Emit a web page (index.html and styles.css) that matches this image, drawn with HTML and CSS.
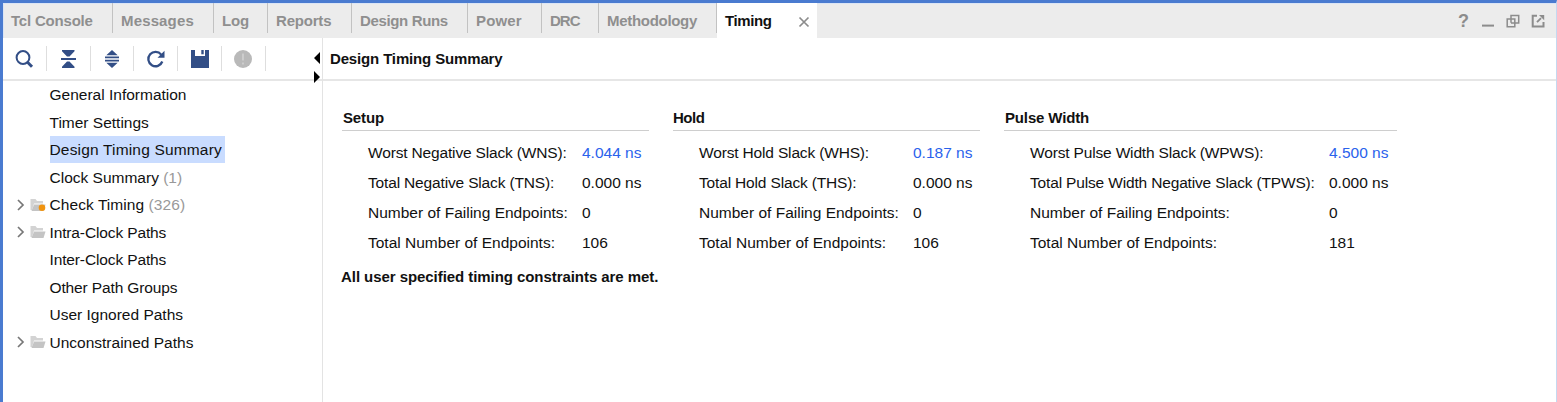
FILE: index.html
```html
<!DOCTYPE html>
<html lang="en">
<head>
<meta charset="utf-8">
<title>Timing</title>
<link rel="stylesheet" href="styles.css">
</head>
<body>
<div class="window">
  <header class="tabbar">
    <nav class="tabs">
      <div class="tab tab-console">Tcl Console</div>
      <div class="tab tab-messages">Messages</div>
      <div class="tab tab-log">Log</div>
      <div class="tab tab-reports">Reports</div>
      <div class="tab tab-runs">Design Runs</div>
      <div class="tab tab-power">Power</div>
      <div class="tab tab-drc">DRC</div>
      <div class="tab tab-method">Methodology</div>
      <div class="tab tab-active"><span>Timing</span>
        <svg class="close" width="12" height="12" viewBox="0 0 12 12"><path d="M1.5 1.5l9 9M10.5 1.5l-9 9" stroke="#8c8c8c" stroke-width="1.7"/></svg>
      </div>
    </nav>
    <div class="window-actions">
      <span class="help">?</span>
      <svg width="14" height="14" viewBox="0 0 14 14"><path d="M1 11.6h12" stroke="#8c8c8c" stroke-width="2"/></svg>
      <svg width="14" height="14" viewBox="0 0 14 14" fill="none" stroke="#8c8c8c" stroke-width="1.5"><path d="M1.2 5h7.6v7.7H1.2z"/><path d="M5 8.800V1.400h7.700V9H5"/></svg>
      <svg width="14" height="14" viewBox="0 0 14 14" fill="none" stroke="#8c8c8c"><path d="M6 1.7H1.7v10.8h10.8V8" stroke-width="2"/><path d="M6 8.200l4-4" stroke-width="1.900"/><path d="M8 1h5.200v5.200z" fill="#8c8c8c" stroke="none"/></svg>
    </div>
  </header>
  <div class="content">
    <aside class="sidebar">
      <div class="toolbar">
        <div class="tool"><svg width="20" height="20" viewBox="0 0 20 20" fill="none" stroke="#324e86"><circle cx="9" cy="8.5" r="6.4" stroke-width="2"/><path d="M13.3 13l4.7 4.7" stroke-width="3"/></svg></div>
        <div class="tool"><svg width="20" height="20" viewBox="0 0 20 20" fill="#324e86"><path d="M4 1h12.500v1.300L11.500 7.500H9L4 2.300zM3 9h15v2H3zM9 12.500h2.500l5 5.200V19H4v-1.300z"/></svg></div>
        <div class="tool"><svg width="20" height="20" viewBox="0 0 20 20" fill="#324e86"><path d="M10 1l5.700 5.300H4.300zM3 7.500h14v1.700H3zM3 10.700h14v1.700H3zM4.300 13.700h11.400L10 19z"/></svg></div>
        <div class="tool"><svg width="20" height="20" viewBox="0 0 20 20"><path d="M16.300 12.500A7.200 7.200 0 1 1 15.200 5.600" fill="none" stroke="#324e86" stroke-width="2.300"/><path d="M18.500 1.800v7h-7z" fill="#324e86"/></svg></div>
        <div class="tool"><svg width="20" height="20" viewBox="0 0 20 20"><path d="M1 1h4v6h10V1h4v18H1z" fill="#324e86"/><path d="M11.300 1h2.400v4.300h-2.400z" fill="#324e86"/></svg></div>
        <div class="tool"><svg width="20" height="20" viewBox="0 0 20 20"><circle cx="10" cy="10" r="9" fill="#b9b9b9"/><path d="M10 4.500v7M10 13.500v2" stroke="#cfcfcf" stroke-width="1.800"/></svg></div>
        <svg class="splitter" width="8" height="32" viewBox="0 0 8 32"><path d="M7 0v12L1 6zM1 19v12l6-6z"/></svg>
      </div>
      <ul class="tree">
        <li><span class="label">General Information</span></li>
        <li><span class="label">Timer Settings</span></li>
        <li><span class="label selected">Design Timing Summary</span></li>
        <li><span class="label">Clock Summary <i>(1)</i></span></li>
        <li><svg class="arrow" width="8" height="12" viewBox="0 0 8 12"><path d="M1 1l5 5-5 5"/></svg><svg class="folder" width="16" height="14" viewBox="0 0 16 14"><path d="M.5 12V1h5l1.500 2h6v2.500H4L2 12z" fill="#d3d3d3"/><path d="M4 6.500h11.500L13.500 13H1.500z" fill="#c4c4c4"/><circle cx="12" cy="9.700" r="3.300" fill="#f0930f"/></svg><span class="label wide">Check Timing <i>(326)</i></span></li>
        <li><svg class="arrow" width="8" height="12" viewBox="0 0 8 12"><path d="M1 1l5 5-5 5"/></svg><svg class="folder" width="16" height="14" viewBox="0 0 16 14"><path d="M.5 12V1h5l1.500 2h6v2.500H4L2 12z" fill="#d3d3d3"/><path d="M4 6.500h11.500L13.500 13H1.500z" fill="#c4c4c4"/></svg><span class="label tight">Intra-Clock Paths</span></li>
        <li><span class="label tight">Inter-Clock Paths</span></li>
        <li><span class="label tight">Other Path Groups</span></li>
        <li><span class="label">User Ignored Paths</span></li>
        <li><svg class="arrow" width="8" height="12" viewBox="0 0 8 12"><path d="M1 1l5 5-5 5"/></svg><svg class="folder" width="16" height="14" viewBox="0 0 16 14"><path d="M.5 12V1h5l1.500 2h6v2.500H4L2 12z" fill="#d3d3d3"/><path d="M4 6.500h11.500L13.500 13H1.500z" fill="#c4c4c4"/></svg><span class="label">Unconstrained Paths</span></li>
      </ul>
    </aside>
    <main class="report">
      <h1>Design Timing Summary</h1>
      <div class="groups">
        <section class="group setup">
          <h2>Setup</h2>
          <dl>
            <dt class="slack">Worst Negative Slack (WNS):</dt><dd class="link">4.044 ns</dd>
            <dt class="slack">Total Negative Slack (TNS):</dt><dd>0.000 ns</dd>
            <dt>Number of Failing Endpoints:</dt><dd>0</dd>
            <dt>Total Number of Endpoints:</dt><dd>106</dd>
          </dl>
        </section>
        <section class="group hold">
          <h2>Hold</h2>
          <dl>
            <dt class="slack">Worst Hold Slack (WHS):</dt><dd class="link">0.187 ns</dd>
            <dt class="slack">Total Hold Slack (THS):</dt><dd>0.000 ns</dd>
            <dt>Number of Failing Endpoints:</dt><dd>0</dd>
            <dt>Total Number of Endpoints:</dt><dd>106</dd>
          </dl>
        </section>
        <section class="group pulse">
          <h2>Pulse Width</h2>
          <dl>
            <dt class="slack">Worst Pulse Width Slack (WPWS):</dt><dd class="link">4.500 ns</dd>
            <dt class="slack">Total Pulse Width Negative Slack (TPWS):</dt><dd>0.000 ns</dd>
            <dt>Number of Failing Endpoints:</dt><dd>0</dd>
            <dt>Total Number of Endpoints:</dt><dd>181</dd>
          </dl>
        </section>
      </div>
      <p class="verdict">All user specified timing constraints are met.</p>
    </main>
  </div>
</div>
</body>
</html>
```
FILE: styles.css
```css
* { box-sizing: border-box; margin: 0; padding: 0; }
body {
  height: 402px;
  overflow: hidden;
  background: #fff;
  color: #111;
  font: 15.5px/20px "Liberation Sans", Arial, sans-serif;
  white-space: nowrap;
}
svg { display: block; flex: none; }
.window {
  height: 402px;
  display: flex;
  flex-direction: column;
  border: solid #4a7bd0;
  border-width: 3px 0 0 3px;
  border-right: 1px solid #c5d8f0;
}
.tabbar {
  height: 35px;
  flex: none;
  display: flex;
  justify-content: space-between;
  background: #ececec;
  box-shadow: inset 1px 1px #dbe5f5;
}
.tabs { display: flex; }
.tab {
  height: 30px;
  padding: 8px 0 0 8px;
  border-right: 1px solid #c2c2c2;
  color: #8f8f8f;
  font-size: 15px;
  font-weight: bold;
  letter-spacing: -.2px;
}
.tab-console { width: 110px; }
.tab-messages { width: 101px; letter-spacing: .15px; }
.tab-log { width: 54px; }
.tab-reports { width: 84px; }
.tab-runs { width: 116px; letter-spacing: -.35px; }
.tab-power { width: 74px; letter-spacing: .15px; }
.tab-drc { width: 57px; letter-spacing: -1px; }
.tab-method { width: 118px; letter-spacing: -.3px; }
.tab-active {
  width: 100px;
  height: 35px;
  display: flex;
  justify-content: space-between;
  padding-right: 7px;
  border: 0;
  background: #fff;
  color: #111;
  letter-spacing: -.4px;
}
.close { margin-top: 5px; }
.window-actions {
  display: flex;
  gap: 11px;
  padding: 11px 11px 0 0;
}
.help {
  width: 12px;
  color: #8c8c8c;
  font-size: 18px;
  line-height: 15px;
  font-weight: bold;
}
.content { flex: 1; display: flex; }
.sidebar { width: 320px; flex: none; border-right: 1px solid #e3e3e3; }
.toolbar {
  position: relative;
  height: 43px;
  display: flex;
  align-items: center;
  border-bottom: 2px solid #e6e6e6;
}
.tool {
  width: 43.800px;
  height: 25px;
  display: flex;
  align-items: center;
  justify-content: center;
  border-right: 1px solid #dedede;
}
/* Collapse arrows overlap the rule under the toolbar */
.splitter { position: absolute; top: 14px; right: 1px; }
.tree { list-style: none; }
.tree li {
  height: 27.500px;
  display: flex;
  align-items: center;
  justify-content: flex-end;
}
.label { width: 272.500px; line-height: 27px; }
.label.selected { width: 175px; margin-right: 97.500px; background: #c9dcff; letter-spacing: .17px; }
.label.wide { letter-spacing: .07px; }
.label.tight { letter-spacing: -.13px; }
.label i { color: #999; font-style: normal; }
.arrow { margin-right: 5px; fill: none; stroke: #777; stroke-width: 1.700; }
.folder { margin-right: 4px; }
.report { flex: 1; }
h1, h2, .verdict { font-size: 15px; line-height: 20px; font-weight: bold; letter-spacing: -.15px; color: #111; }
h1 { height: 43px; padding: 11px 0 0 7px; border-bottom: 2px solid #e6e6e6; }
.groups { display: flex; gap: 24px; padding: 27px 0 0 19px; }
.group { width: 307px; }
.group.pulse { width: 393px; }
h2 { height: 23px; padding-left: 1px; border-bottom: 1px solid #cecece; }
.hold h2 { padding-left: 0; letter-spacing: -.5px; }
dl {
  display: grid;
  grid-template-columns: 214px 1fr;
  grid-auto-rows: 30px;
  padding: 7px 0 0 26px;
  line-height: 30px;
}
.pulse dl { grid-template-columns: 299px 1fr; }
.slack { letter-spacing: -.16px; }
.link { color: #2a62ec; }
.verdict { padding: 9px 0 0 18px; letter-spacing: -.06px; }
```
